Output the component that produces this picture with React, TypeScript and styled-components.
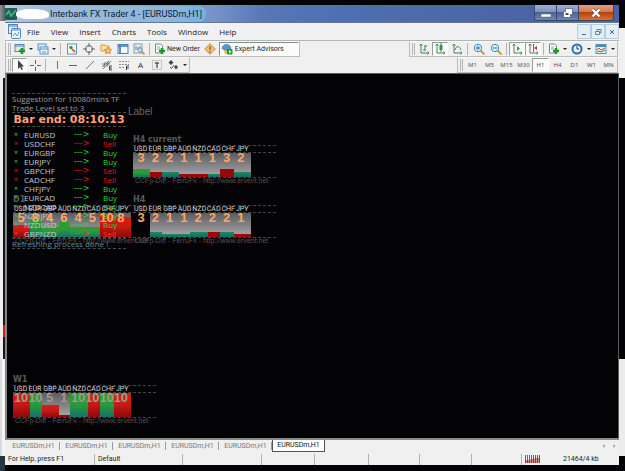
import React from "react";
import styled, { createGlobalStyle, css } from "styled-components";

const GlobalStyle = createGlobalStyle`
  * { box-sizing: border-box; }
  body { margin: 0; background: #030306; }
  button { font: inherit; color: inherit; border: 0; background: none; padding: 0; margin: 0; }
`;

const compactFont = `Roboto, "Noto Sans", sans-serif`;

const Desktop = styled.div`
  min-height: 100vh;
  display: grid;
  grid-template-columns: 5px minmax(0, 1fr) 6px;
  background: #030306;
  font-family: "Open Sans", "Noto Sans", sans-serif;
  font-size: 8px;
  line-height: 10px;
  color: #222;
  overflow: hidden;
`;

const Edge = styled.div`
  display: flex;
  flex-direction: column;
`;

const EdgePiece = styled.div<{ $h?: number; $bg: string }>`
  ${(p) => (p.$h ? `height: ${p.$h}px; flex: none;` : "flex: 1;")}
  background: ${(p) => p.$bg};
`;

const Window = styled.main`
  display: flex;
  flex-direction: column;
  min-width: 0;
  margin: 5px 0 6px;
  background: #f0f0f0;
`;

const TitleBar = styled.header`
  display: flex;
  align-items: center;
  height: 18px;
  border-bottom: 1px solid #66788f;
  background: linear-gradient(90deg, #b4cbdd 0, #8fabd2 12%, #7893c9 34%, #5876b8 42%, #4e6fb2 55%, #4c65a5 80%, #4a62a4 100%);
`;

const Redaction = styled.span`
  width: 33px;
  height: 10px;
  margin-left: -1px;
  border-radius: 45% 50% 30% 40%;
  background: #fff;
`;

const Title = styled.h1`
  margin: 0;
  padding: 0 4px 0 1px;
  font-family: ${compactFont};
  font-size: 9px;
  line-height: 16px;
  font-weight: 400;
  color: #16202e;
  border-radius: 8px;
  background: linear-gradient(90deg, #9fbcd8, #8cb4dc 80%, #6fb4e4);
  white-space: nowrap;
`;

const CaptionButtons = styled.div`
  display: flex;
  align-self: flex-start;
  margin-left: auto;
  margin-right: 5px;
  border: 1px solid #38486c;
  border-top: 0;
  border-radius: 0 0 3px 3px;
  overflow: hidden;
`;

const CaptionButton = styled.button<{ $close?: boolean }>`
  display: grid;
  place-items: center;
  width: ${(p) => (p.$close ? 34 : 22)}px;
  height: 15px;
  border-right: ${(p) => (p.$close ? "0" : "1px solid #38486c")};
  background: ${(p) =>
    p.$close
      ? "linear-gradient(#e0a184 0, #d27a55 45%, #b2420f 50%, #d8722a 100%)"
      : "linear-gradient(#9fadcd 0, #8292ba 45%, #4d6294 50%, #7086b4 100%)"};
`;

const MenuBar = styled.nav`
  display: flex;
  align-items: center;
  height: 18px;
  padding-left: 3px;
  border-bottom: 1px solid #aeb8b2;
  background: #f1f1f3;
`;

const Menus = styled.div`
  display: flex;
  gap: 11px;
  margin-left: 5px;
`;

const MdiButtons = styled.div`
  display: flex;
  margin-left: auto;
`;

const MdiButton = styled.button`
  display: grid;
  place-items: center;
  width: 14px;
  height: 15px;
  border: 1px solid #b4cfdf;
  background: #e2eef8;
`;

const ToolRow = styled.div`
  display: flex;
  justify-content: space-between;
  height: 16px;
`;

const ToolGroup = styled.div<{ $inset?: number }>`
  display: flex;
  align-items: center;
  padding-left: 2px;
  margin-right: ${(p) => p.$inset ?? 0}px;
  border: 1px solid #b9beb6;
  border-top-color: #fafafa;
`;

const Grip = styled.span`
  width: 3px;
  height: 12px;
  margin-right: 1px;
  border-left: 1px solid #b5b5b5;
  border-right: 1px solid #b5b5b5;
`;

const Divider = styled.span`
  width: 1px;
  height: 12px;
  margin: 0 2px;
  background: #b4b4b4;
`;

const Tool = styled.button<{ $on?: boolean; $w?: number }>`
  display: grid;
  place-items: center;
  width: ${(p) => p.$w ?? 17}px;
  height: 14px;
  border: 1px solid transparent;
  ${(p) =>
    p.$on &&
    css`
      border-color: #96a09a #fff #fff #96a09a;
      background: #fafafa;
    `}
`;

const Caret = styled.span`
  width: 8px;
  display: grid;
  place-items: center;
  &::after {
    content: "";
    border: 2px solid transparent;
    border-top-color: #222;
    border-bottom: 0;
  }
`;

const LabelTool = styled.button<{ $on?: boolean }>`
  display: flex;
  align-items: center;
  gap: 1px;
  height: 14px;
  font-family: ${compactFont};
  font-size: 7px;
  white-space: nowrap;
  padding: 0 2px;
  ${(p) =>
    p.$on &&
    css`
      width: 80px;
      border: 1px solid;
      border-color: #7f8f86 #fff #fff #7f8f86;
      background: #fbfbfb;
      gap: 2px;
      padding: 0 1px;
    `}
`;

const Period = styled(Tool)`
  font-size: 6px;
  font-family: "Noto Sans", sans-serif;
  color: #555;
`;

const Canvas = styled.section`
  position: relative;
  flex: 1;
  min-height: 365px;
  border-top: 1px solid #55605a;
  border-left: 2px solid #80888a;
  border-right: 1px solid #55605a;
  background: #030306;
  overflow: hidden;
`;

const Signals = styled.div`
  position: absolute;
  left: 5px;
  top: 19px;
  width: 114px;
  line-height: 9px;
  color: #999a9c;
  white-space: nowrap;
  z-index: 1;
`;

const SignalBlock = styled.div`
  border-top: 1px dashed #4a4a4a;
`;

const Countdown = styled.div`
  border: dashed #4a4a4a;
  border-width: 1px 0;
  font-family: "DejaVu Sans", sans-serif;
  font-size: 11px;
  line-height: 13px;
  font-weight: 700;
  color: #ffa07a;
  text-align: center;
`;

const SignalTable = styled.table`
  width: 100%;
  margin-top: 3px;
  border-collapse: collapse;
  td { padding: 0; height: 9px; line-height: 9px; vertical-align: middle; }
`;

const SignalRow = styled.tr<{ $buy: boolean }>`
  color: ${(p) => (p.$buy ? "#32d040" : "#e41616")};
  td:first-child { width: 12px; padding-left: 2px; font-size: 7px; }
  td:nth-child(2) { width: 50px; color: #c8c8c8; }
  td:nth-child(3) { width: 29px; font-family: "DejaVu Sans", sans-serif; }
  &:last-child { color: #ff3c30; }
`;

const Refresh = styled.div`
  border: dashed #4a4a4a;
  border-width: 1px 0;
  color: #5f8fa0;
`;

const CanvasLabel = styled.div`
  position: absolute;
  left: 121px;
  top: 33px;
  font-family: "Liberation Sans", sans-serif;
  font-size: 10px;
  color: #696969;
`;

const Indicator = styled.section<{ $x: number; $y: number }>`
  position: absolute;
  left: ${(p) => p.$x}px;
  top: ${(p) => p.$y}px;
  width: 143px;
  font-family: "Liberation Sans", sans-serif;
`;

const IndicatorTitle = styled.h2`
  margin: 0;
  font-family: "DejaVu Sans", sans-serif;
  font-size: 8px;
  line-height: 10px;
  font-weight: 700;
  color: #5a5a5a;
`;

const Codes = styled.div`
  display: grid;
  grid-template-columns: repeat(8, 14px);
  justify-content: space-between;
  padding: 0 26px 0 1px;
  border: dashed #454545;
  border-width: 1px 0;
  font-family: Roboto, sans-serif;
  font-size: 7px;
  line-height: 6px;
  color: #d8d8d8;
`;

const Plot = styled.div`
  position: relative;
  width: 118px;
`;

const Bars = styled.div`
  display: grid;
  grid-template-columns: 17fr 12fr 17fr 11fr 18fr 12fr 14fr 17fr;
  align-items: end;
  height: 24px;
`;

const BarSlot = styled.div<{ $empty: boolean }>`
  display: flex;
  align-items: flex-end;
  height: 24px;
  background: ${(p) => (p.$empty ? "transparent" : "linear-gradient(#5c5c5e, #a9a9ab)")};
`;

const tones = {
  g: "linear-gradient(#2ba02b, #2a9a3a 50%, #14706e)",
  t: "linear-gradient(#208a5c, #126a6c)",
  r: "linear-gradient(#dc1c14, #c41a12 50%, #900808)",
  d: "#980808",
};

const Bar = styled.div<{ $h: number; $tone: keyof typeof tones }>`
  width: 100%;
  height: ${(p) => p.$h}px;
  background: ${(p) => tones[p.$tone]};
`;

const Scores = styled.div<{ $muted?: boolean }>`
  position: absolute;
  inset: 0 3px auto 1px;
  z-index: 2;
  display: grid;
  grid-template-columns: repeat(8, minmax(0, 1fr));
  justify-items: center;
  font-size: 13px;
  line-height: 10px;
  font-weight: 700;
  color: ${(p) => (p.$muted ? "#a09a90" : "#f9a868")};
`;

const Credit = styled.div`
  border-top: 1px dashed #454545;
  padding-left: 2px;
  font-size: 7px;
  line-height: 6px;
  color: #555;
  white-space: nowrap;
`;

const Tabs = styled.div`
  display: flex;
  height: 15px;
  padding-left: 2px;
  border-top: 2px solid #858c86;
  background: #f0f0f0;
`;

const Tab = styled.button<{ $active?: boolean }>`
  width: 53px;
  height: 12px;
  font-family: ${compactFont};
  font-size: 7px;
  line-height: 11px;
  color: ${(p) => (p.$active ? "#111" : "#777")};
  background: ${(p) => (p.$active ? "#fff" : "linear-gradient(#999, #999) right center / 1px 8px no-repeat")};
  ${(p) => p.$active && "border: solid #555; border-width: 0 1px 1px;"}
`;

const TabArrows = styled.div`
  display: flex;
  gap: 2px;
  margin-left: auto;
  align-items: center;
  color: #888;
`;

const StatusBar = styled.footer`
  display: flex;
  align-items: center;
  height: 12px;
  font-family: ${compactFont};
  font-size: 7px;
  line-height: 11px;
  color: #1c1c1c;
  white-space: nowrap;
`;

const StatusCell = styled.div<{ $w: number; $grow?: boolean }>`
  flex: ${(p) => (p.$grow ? "1 1" : "0 0")} ${(p) => p.$w}px;
  height: 11px;
  padding-left: 3px;
  border-right: 1px solid #b0b4ae;
`;

const Traffic = styled.div`
  display: flex;
  align-items: center;
  flex: none;
  width: 97px;
  padding-left: 3px;
  gap: 23px;
`;

const Icon = ({ children, w = 12 }: { children: React.ReactNode; w?: number }) => (
  <svg width={w} height="12" viewBox={`0 0 ${w} 12`} fill="none" aria-hidden="true">
    {children}
  </svg>
);

const Plus = () => <path d="M8 5v6M5 8h6" stroke="#1d9a24" strokeWidth="2.6" />;
const Axes = () => <path d="M3 1v9h8M1.5 2.5 3 1l1.5 1.5M9.5 8.5 11 10l-1.5 1.5" stroke="#5c7567" />;

const icons = {
  app: <Icon><rect width="12" height="12" fill="#23605c" /><path d="m1 7 3-4 2 5 5-6" stroke="#48b880" strokeWidth="1.5" /><path d="M1 10h9" stroke="#154a60" /></Icon>,
  newChart: <Icon><rect x="1" y="1.5" width="9" height="7" fill="#d9e9f6" stroke="#5688b5" /><path d="M1 3h9" stroke="#5688b5" /><Plus /></Icon>,
  profiles: <Icon><rect x="1" y="1" width="8" height="6" fill="#dcecf9" stroke="#5b95c8" /><rect x="3" y="4" width="8" height="7" fill="#e9f4fc" stroke="#5b95c8" /><path d="M3 6h8M5 9h4" stroke="#5b95c8" /></Icon>,
  market: <Icon><rect x="1.5" y="1" width="9" height="10" fill="#fff" stroke="#5b93bd" /><circle cx="5" cy="4.5" r="1.7" fill="#279e3a" /><path d="m6 6 3 3" stroke="#d66a2b" strokeWidth="2" /></Icon>,
  target: <Icon><circle cx="6" cy="6" r="3.5" stroke="#666" /><path d="M6 0v4M6 8v4M0 6h4M8 6h4" stroke="#666" /></Icon>,
  favorites: <Icon><path d="M1 2h4l1 1h3v5H1z" fill="#ffe29a" stroke="#d79b42" /><path d="m8 4 1.1 2.2 2.5.3-1.8 1.7.5 2.6L8 9.6l-2.3 1.2.5-2.6-1.8-1.7 2.5-.3z" fill="#ffc35c" stroke="#d27d2e" strokeWidth=".8" /></Icon>,
  terminal: <Icon><rect x="1" y="1.5" width="10" height="9" fill="#f2f8fd" stroke="#4b82b8" /><path d="M1 3h10M3 3v7" stroke="#3a75b0" strokeWidth="1.6" /></Icon>,
  tester: <Icon><rect x="1" y="1" width="8" height="9" fill="#edf4f8" stroke="#7f9baa" /><path d="M3 7V3m2 4V4m2 3V3" stroke="#557a90" /><circle cx="7" cy="7" r="2" fill="#d8ecfa" stroke="#6997b8" /><path d="m8.5 8.5 3 3" stroke="#d08a3c" strokeWidth="1.6" /></Icon>,
  order: <Icon><path d="M1.5 1h5l2 2v7h-7z" fill="#fff" stroke="#758d7a" /><path d="M3 4h3M3 6h3" stroke="#8aa" /><Plus /></Icon>,
  alert: <Icon><path d="m6 .7 5.3 5.3L6 11.3.7 6z" fill="#f4bd70" stroke="#c88a48" /><path d="M6 3v4M6 8v1.5" stroke="#8a5c30" strokeWidth="1.3" /></Icon>,
  expert: <Icon><path d="M2 6h7l-1 5H4z" fill="#efb963" /><path d="M1 5.5C2 0 9 0 10 5.5L5.5 7z" fill="#5298d0" stroke="#3272a8" strokeWidth=".7" /><rect x="6" y="6" width="5.5" height="5.5" rx="1" fill="#239a2b" /><path d="m8 7 2.5 1.7L8 10.5z" fill="#fff" /></Icon>,
  barChart: <Icon><Axes /><path d="M7 2v6M7 3h2M5 7h2" stroke="#2c8a46" /></Icon>,
  candles: <Icon><Axes /><path d="M7 0v9" stroke="#2c8a46" /><rect x="5.5" y="2" width="3" height="5" fill="#24a044" /></Icon>,
  line: <Icon><Axes /><path d="M4 7c1-4 4-5 6 0" stroke="#2c8a46" /></Icon>,
  zoomIn: <Icon><path d="m7.5 7.5 4 4" stroke="#d09a45" strokeWidth="2" /><circle cx="5" cy="5" r="3.7" fill="#d9effc" stroke="#3a8cc4" /><path d="M3 5h4M5 3v4" stroke="#2372a8" /></Icon>,
  zoomOut: <Icon><path d="m7.5 7.5 4 4" stroke="#d09a45" strokeWidth="2" /><circle cx="5" cy="5" r="3.7" fill="#d9effc" stroke="#3a8cc4" /><path d="M3 5h4" stroke="#2372a8" /></Icon>,
  scroll: <Icon><Axes /><path d="m6 3 3 2.5L6 8z" fill="#26a33e" /></Icon>,
  shift: <Icon><Axes /><path d="M6.5 1v8" stroke="#5c7567" /><path d="m7 5 3-2v4z" fill="#cc3322" /></Icon>,
  clock: <Icon><circle cx="6" cy="6" r="4.5" fill="#e8f4fd" stroke="#2e6fb4" strokeWidth="2" /><path d="M6 3v3h2" stroke="#333" /></Icon>,
  template: <Icon><rect x="1" y="1.5" width="10" height="9" fill="#e9f5f0" stroke="#5e8fb4" /><path d="M1 3h10" stroke="#4d88bd" strokeWidth="2" /><path d="m2 7 2-2 2 2 4-2" stroke="#c0522b" /><path d="m2 9 2-1 2 1 4-2" stroke="#2c8a46" /></Icon>,
  cursor: <Icon><path d="M4 1v9l2-2 1.5 3 1.5-.8L7.5 7.5H10z" fill="#444" /></Icon>,
  cross: <Icon><path d="M6.5 1v4M6.5 8v4M1 6.5h4M8 6.5h4" stroke="#666" /></Icon>,
  vline: <Icon><path d="M6.5 2v8" stroke="#777" /></Icon>,
  hline: <Icon><path d="M2 6.5h8" stroke="#666" /></Icon>,
  trend: <Icon><path d="m2 10 8-8" stroke="#777" /></Icon>,
  channel: <Icon><path d="m1 8 7-6M2 10l8-8M4 3 3 8M7 2 6 8M1 5h8" stroke="#666" strokeWidth=".8" /><path d="M11 7H8.5v4H11M8.5 9H11" stroke="#444" /></Icon>,
  fibo: <Icon><path d="M1 2.5h10M1 5.5h10M1 8.5h6" stroke="#888" strokeDasharray="2 1" /><path d="M11 7H8.5v4M8.5 9H11" stroke="#444" /></Icon>,
  textBox: <Icon><rect x="1.5" y="1.5" width="9" height="9" stroke="#999" strokeDasharray="1 1" /><path d="M4 4h4M6 4v5" stroke="#555" strokeWidth="1.4" /></Icon>,
  arrows: <Icon><path d="m4 1 2.5 2.5L4 6 1.5 3.5zM9 6l2 2-2 2.5L7 8z" fill="#444" /><path d="m3 8 1.5 1.5L7 6" stroke="#555" /></Icon>,
};

const currencies = ["USD", "EUR", "GBP", "AUD", "NZD", "CAD", "CHF", "JPY"];

type Tone = keyof typeof tones;
type Panel = { name: string; x: number; y: number; scores: number[]; bars: [number, Tone][]; muted?: boolean };

const panels: Panel[] = [
  { name: "H4 current", x: 126, y: 61, scores: [3, 2, 2, 1, 1, 1, 3, 2], bars: [[8, "g"], [5, "d"], [5, "t"], [3, "d"], [3, "d"], [3, "t"], [8, "d"], [5, "t"]] },
  { name: "D1", x: 6, y: 121, scores: [5, 8, 4, 6, 4, 5, 10, 8], bars: [[12, "r"], [19, "g"], [10, "g"], [15, "g"], [10, "g"], [10, "g"], [24, "r"], [20, "r"]] },
  { name: "H4", x: 126, y: 121, scores: [3, 2, 1, 1, 2, 2, 2, 1], bars: [[0, "t"], [5, "t"], [3, "t"], [3, "t"], [5, "t"], [5, "d"], [5, "t"], [3, "d"]] },
  { name: "W1", x: 6, y: 301, muted: true, scores: [10, 10, 5, 1, 10, 10, 10, 10], bars: [[24, "r"], [24, "g"], [12, "r"], [2, "d"], [24, "g"], [24, "r"], [24, "g"], [24, "r"]] },
];

const signals: [string, boolean][] = [
  ["EURUSD", true], ["USDCHF", false], ["EURGBP", true], ["EURJPY", true], ["GBPCHF", false], ["CADCHF", false],
  ["CHFJPY", true], ["EURCAD", true], ["NZDCAD", true], ["NZDJPY", true], ["NZDUSD", true], ["GBPNZD", false],
];

const StrengthPanel = ({ panel }: { panel: Panel }) => (
  <Indicator $x={panel.x} $y={panel.y}>
    <IndicatorTitle>{panel.name}</IndicatorTitle>
    <Codes>{currencies.map((c) => <span key={c}>{c}</span>)}</Codes>
    <Plot>
      <Bars>
        {panel.bars.map(([h, tone], i) => (
          <BarSlot key={i} $empty={h === 0}><Bar $h={h} $tone={tone} /></BarSlot>
        ))}
      </Bars>
      <Scores $muted={panel.muted}>{panel.scores.map((s, i) => <span key={i}>{s}</span>)}</Scores>
    </Plot>
    <Credit>CCFp-Diff - FerruFx - http://www.ervent.net</Credit>
  </Indicator>
);

const T = ({ icon, label, on, w }: { icon: keyof typeof icons; label: string; on?: boolean; w?: number }) => (
  <Tool aria-label={label} $on={on} $w={w}>{icons[icon]}</Tool>
);

export default function App() {
  return (
    <Desktop>
      <GlobalStyle />
      <Edge>
        <EdgePiece $h={5} $bg="#030306" />
        <EdgePiece $h={16} $bg="linear-gradient(90deg, #8c9195, #555d64)" />
        <EdgePiece $h={57} $bg="#ececec" />
        <EdgePiece $h={247} $bg="linear-gradient(90deg, #eee 3px, #17171a 3px)" />
        <EdgePiece $h={12} $bg="linear-gradient(90deg, #eee 3px, #cc2418 3px)" />
        <EdgePiece $h={22} $bg="linear-gradient(90deg, #eee 3px, #17171a 3px)" />
        <EdgePiece $bg="linear-gradient(90deg, #dadada 2px, #f4f4f4 2px)" />
        <EdgePiece $h={15} $bg="#26343f" />
      </Edge>
      <Window>
        <TitleBar>
          {icons.app}
          <Redaction />
          <Title>Interbank FX Trader 4 - [EURUSDm,H1]</Title>
          <CaptionButtons>
            <CaptionButton aria-label="Minimize"><Icon><rect x="1" y="7" width="10" height="3" fill="#fff" stroke="#5a6278" strokeWidth=".5" /></Icon></CaptionButton>
            <CaptionButton aria-label="Restore"><Icon><path d="M3.5 1.5h7v6h-2v3h-7v-6h2z" fill="#fff" stroke="#4a546c" strokeWidth=".7" /><rect x="3.5" y="6" width="3" height="2" fill="#44537c" /></Icon></CaptionButton>
            <CaptionButton $close aria-label="Close"><Icon><path d="m2.5 2.5 7 7M9.5 2.5l-7 7" stroke="#6b4a40" strokeWidth="3.4" /><path d="m2.5 2.5 7 7M9.5 2.5l-7 7" stroke="#fff" strokeWidth="2.4" /></Icon></CaptionButton>
          </CaptionButtons>
        </TitleBar>
        <MenuBar>
          <svg width="14" height="15" viewBox="0 0 14 15" fill="none" aria-hidden="true">
            <rect x=".5" y=".5" width="9" height="9" fill="#dcecf9" stroke="#4c86c0" /><path d="M1 2h9" stroke="#4c86c0" />
            <rect x="3.5" y="4.5" width="9" height="10" rx="1" fill="#f0f8ff" stroke="#4c86c0" /><path d="M4 6h8" stroke="#4c86c0" /><path d="m5 12 2-3 2 3 2-4" stroke="#6a9cc8" />
          </svg>
          <Menus>
            {["File", "View", "Insert", "Charts", "Tools", "Window", "Help"].map((m) => <button key={m}>{m}</button>)}
          </Menus>
          <MdiButtons>
            <MdiButton aria-label="Minimize chart"><Icon><path d="M4 8.5h4" stroke="#51687c" /></Icon></MdiButton>
            <MdiButton aria-label="Restore chart"><Icon><path d="M5 5V3.5h4V7H8M3.5 5.5h4v3h-4z" stroke="#6a8094" /></Icon></MdiButton>
            <MdiButton aria-label="Close chart"><Icon><path d="m4 4 4 4M8 4 4 8" stroke="#51687c" /></Icon></MdiButton>
          </MdiButtons>
        </MenuBar>
        <ToolRow>
          <ToolGroup>
            <Grip />
            <T icon="newChart" label="New chart" w={15} /><Caret />
            <T icon="profiles" label="Profiles" w={15} /><Caret />
            <Divider />
            <T icon="market" label="Market watch" /><T icon="target" label="Data window" /><T icon="favorites" label="Navigator" />
            <T icon="terminal" label="Terminal" /><T icon="tester" label="Strategy tester" w={16} />
            <Divider />
            <LabelTool>{icons.order}New Order</LabelTool>
            <T icon="alert" label="MetaEditor" />
            <LabelTool $on>{icons.expert}Expert Advisors</LabelTool>
          </ToolGroup>
          <ToolGroup $inset={1}>
            <Grip />
            <T icon="barChart" label="Bar chart" w={16} /><T icon="candles" label="Candlesticks" on w={16} /><T icon="line" label="Line chart" />
            <Divider />
            <T icon="zoomIn" label="Zoom in" /><T icon="zoomOut" label="Zoom out" />
            <Divider />
            <T icon="scroll" label="Auto scroll" on w={16} /><T icon="shift" label="Chart shift" on w={16} />
            <Divider />
            <T icon="order" label="Indicators" w={15} /><Caret />
            <T icon="clock" label="Periods" w={16} /><Caret />
            <T icon="template" label="Templates" w={16} /><Caret />
          </ToolGroup>
        </ToolRow>
        <ToolRow>
          <ToolGroup>
            <Grip />
            <T icon="cursor" label="Cursor" on w={15} /><T icon="cross" label="Crosshair" w={16} />
            <Divider />
            <T icon="vline" label="Vertical line" /><T icon="hline" label="Horizontal line" w={16} /><T icon="trend" label="Trendline" />
            <T icon="channel" label="Channel" /><T icon="fibo" label="Fibonacci" />
            <Tool aria-label="Text">A</Tool>
            <T icon="textBox" label="Text label" w={16} /><T icon="arrows" label="Arrows" w={16} /><Caret />
          </ToolGroup>
          <ToolGroup $inset={1}>
            <Grip />
            {["M1", "M5", "M15", "M30", "H1", "H4", "D1", "W1", "MN"].map((p) => <Period key={p} $on={p === "H1"}>{p}</Period>)}
          </ToolGroup>
        </ToolRow>
        <Canvas>
          {panels.map((p) => <StrengthPanel key={p.name} panel={p} />)}
          <CanvasLabel>Label</CanvasLabel>
          <Signals>
            <SignalBlock>
              <div>Suggestion for 10080mins TF</div>
              <div>Trade Level set to 3</div>
            </SignalBlock>
            <Countdown>Bar end: 08:10:13</Countdown>
            <SignalTable>
              <tbody>
                {signals.map(([pair, buy]) => (
                  <SignalRow key={pair} $buy={buy}>
                    <td>×</td><td>{pair}</td><td>---&gt;</td><td>{buy ? "Buy" : "Sell"}</td>
                  </SignalRow>
                ))}
              </tbody>
            </SignalTable>
            <Refresh>Refreshing process done !</Refresh>
          </Signals>
        </Canvas>
        <Tabs>
          {[0, 1, 2, 3, 4, 5].map((i) => <Tab key={i} $active={i === 5}>EURUSDm,H1</Tab>)}
          <TabArrows>
            <button aria-label="Scroll tabs left"><Icon w={9}><path d="M5.5 4v4l-2-2z" fill="#999" /></Icon></button>
            <button aria-label="Scroll tabs right"><Icon w={9}><path d="M3.5 4v4l2-2z" fill="#999" /></Icon></button>
          </TabArrows>
        </Tabs>
        <StatusBar>
          <StatusCell $w={90}>For Help, press F1</StatusCell>
          <StatusCell $w={89} $grow>Default</StatusCell>
          <StatusCell $w={79} /><StatusCell $w={53} /><StatusCell $w={54} /><StatusCell $w={51} /><StatusCell $w={52} /><StatusCell $w={50} />
          <Traffic>
            <svg width="15" height="8" viewBox="0 0 15 8" aria-hidden="true">
              <path d="M.5 0v5M2.5 0v5M4.5 0v5M6.5 0v5M8.5 0v4M10.5 0v3M12.5 0v3M14.5 0v2" stroke="#3a8a2e" />
              <path d="M.5 5v3M2.5 5v3M4.5 5v3M6.5 4v4M8.5 4v4M10.5 3v5M12.5 3v5M14.5 2v6" stroke="#b02a20" strokeWidth="1.5" />
            </svg>
            21464/4 kb
          </Traffic>
        </StatusBar>
      </Window>
      <Edge>
        <EdgePiece $h={28} $bg="#030306" />
        <EdgePiece $h={50} $bg="#f0f0f0" />
        <EdgePiece $bg="#030306" />
        <EdgePiece $h={97} $bg="#ececec" />
        <EdgePiece $h={15} $bg="#030306" />
      </Edge>
    </Desktop>
  );
}
